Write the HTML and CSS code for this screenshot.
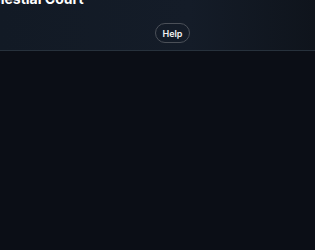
FILE: index.html
```html
<!DOCTYPE html>
<html lang="en">
<head>
    <meta charset="UTF-8">
    <meta name="viewport" content="width=device-width, initial-scale=1.0">
    <title>Celestial Court</title>
    <link rel="stylesheet" href="styles.css">
</head>
<body>
    <header class="top-bar">
        <h1 class="court-title">Celestial Court</h1>
        <nav class="top-nav">
            <button class="help-button" type="button">Help</button>
        </nav>
    </header>
    <main class="court-view"></main>
</body>
</html>
```

FILE: styles.css
```css
html, body {
    margin: 0;
    padding: 0;
    height: 100%;
}
body {
    background-color: #0b0e16;
    font-family: Inter, "Noto Sans", sans-serif;
    color: #ffffff;
    overflow: hidden;
}
.top-bar {
    height: 51px;
    box-sizing: border-box;
    border-bottom: 1px solid #27313c;
    background: linear-gradient(90deg, #121a25 0%, #141c28 60%, #0f141c 100%);
    position: relative;
}
/* title sits mostly above the visible area */
.court-title {
    margin: 0;
    position: absolute;
    left: -18px;
    top: -10px;
    font-size: 14px;
    line-height: 17px;
    font-weight: 700;
    white-space: nowrap;
}
.top-nav {
    display: flex;
    justify-content: center;
    padding-top: 23px;
    padding-left: 30px;
}
.help-button {
    height: 20px;
    padding: 0 6px;
    border: 1px solid #4b5058;
    border-radius: 10px;
    background: transparent;
    color: #f2f2f2;
    font-family: Inter, "Noto Sans", sans-serif;
    font-size: 9px;
    font-weight: 600;
    cursor: pointer;
}
.court-view {
    height: calc(100% - 51px);
}
```
